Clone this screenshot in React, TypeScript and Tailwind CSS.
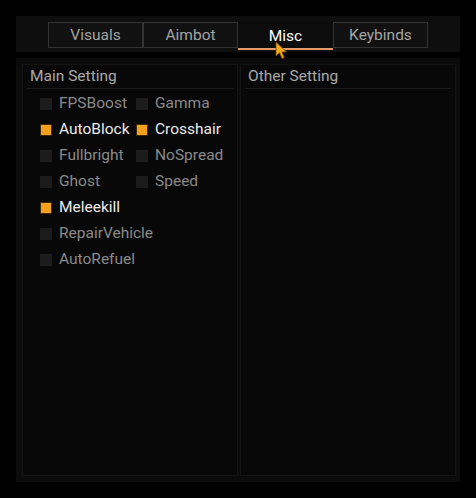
const tabs = ['Visuals', 'Aimbot', 'Misc', 'Keybinds'];

const options: { label: string; on: boolean }[][] = [
  [
    { label: 'FPSBoost', on: false },
    { label: 'Gamma', on: false },
  ],
  [
    { label: 'AutoBlock', on: true },
    { label: 'Crosshair', on: true },
  ],
  [
    { label: 'Fullbright', on: false },
    { label: 'NoSpread', on: false },
  ],
  [
    { label: 'Ghost', on: false },
    { label: 'Speed', on: false },
  ],
  [{ label: 'Meleekill', on: true }],
  [{ label: 'RepairVehicle', on: false }],
  [{ label: 'AutoRefuel', on: false }],
];

function Check({ label, on }: { label: string; on: boolean }) {
  return (
    <div className="flex items-center gap-[7px] h-[26px]">
      {on ? (
        <span className="w-[12px] h-[12px] bg-[#f4a21e] border border-[#3b2a10] shrink-0" />
      ) : (
        <span className="w-[12px] h-[12px] bg-[#1c1c1c] shrink-0" />
      )}
      <span className={on ? 'text-[#ececec]' : 'text-[#8a8a8a]'}>{label}</span>
    </div>
  );
}

function Column({ title, children }: { title: string; children?: React.ReactNode }) {
  return (
    <div className="w-[216px] shrink-0 flex flex-col bg-[#080808] border border-[#131313]">
      <div className="mx-[4px] pl-[3px] h-[24px] flex items-center border-b border-[#1c1c1c] text-[#a8a8a8]">
        {title}
      </div>
      {children}
    </div>
  );
}

export default function App() {
  return (
    <div className="w-[476px] h-[498px] bg-black p-4 font-['Roboto',sans-serif] text-[15.5px] leading-none">
      <div className="h-full flex flex-col gap-[6px]">
        <div className="relative h-[36px] bg-[#0e0e0e] flex pl-[32px] pt-[6px]">
          {tabs.map((t) =>
            t === 'Misc' ? (
              <div
                key={t}
                className="w-[95px] h-[28px] flex items-start justify-center pt-[7px] border-b-2 border-[#e39a6c] text-white bg-[#0c0c0c]"
              >
                {t}
              </div>
            ) : (
              <div
                key={t}
                className="w-[95px] h-[26px] flex items-center justify-center pt-[1px] border border-[#333333] bg-[#111111] text-[#a3a3a3]"
              >
                {t}
              </div>
            )
          )}
          <svg
            className="absolute left-[259px] top-[25px]"
            width="14"
            height="20"
            viewBox="0 0 14 20"
          >
            <path
              d="M1 1 L1 15 L4.5 11.8 L7 17.5 L9.3 16.5 L6.9 11 L11.5 11 Z"
              fill="#f4a81c"
              stroke="#7a4a00"
              strokeWidth="0.8"
              strokeLinejoin="round"
            />
          </svg>
        </div>
        <div className="flex-1 bg-[#0b0b0b] pl-[6px] pr-[8px] py-[6px] flex gap-[2px]">
          <Column title="Main Setting">
            <div className="pl-[17px] pt-[2px] flex flex-col">
              {options.map((row, i) => (
                <div key={i} className="grid grid-cols-[96px_1fr]">
                  {row.map((o) => (
                    <Check key={o.label} label={o.label} on={o.on} />
                  ))}
                </div>
              ))}
            </div>
          </Column>
          <Column title="Other Setting" />
        </div>
      </div>
    </div>
  );
}
